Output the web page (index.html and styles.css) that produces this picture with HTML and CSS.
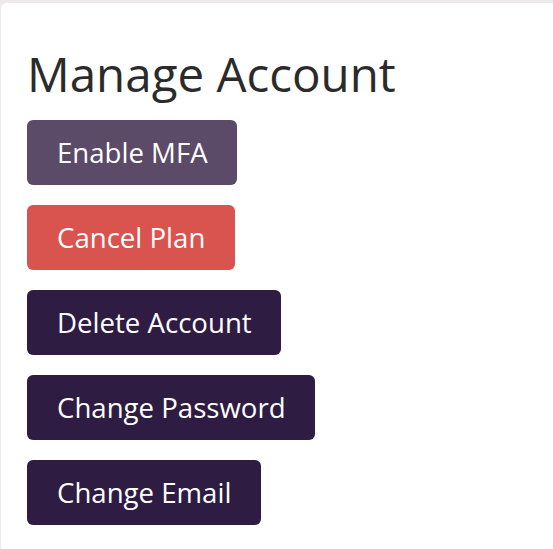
FILE: index.html
```html
<!DOCTYPE html>
<html lang="en">
<head>
<meta charset="utf-8">
<title>Manage Account</title>
<link rel="stylesheet" href="styles.css">
</head>
<body>
<main class="card">
  <h1 class="title">Manage Account</h1>
  <div class="actions">
    <button class="btn btn-mfa">Enable MFA</button>
    <button class="btn btn-danger">Cancel Plan</button>
    <button class="btn btn-dark">Delete Account</button>
    <button class="btn btn-dark">Change Password</button>
    <button class="btn btn-dark">Change Email</button>
  </div>
</main>
</body>
</html>
```
FILE: styles.css
```css
html, body {
  margin: 0;
  padding: 0;
  background: #eeeaea;
  font-family: "Open Sans", "Noto Sans", sans-serif;
  overflow: hidden;
}
.card {
  margin: 3px 0 0 1px;
  background: #ffffff;
  border-radius: 6px 0 0 0;
  padding: 39px 26px 40px 26px;
  min-height: 600px;
}
.title {
  margin: 0 0 14px 0;
  font-size: 47.5px;
  font-weight: 400;
  line-height: 64px;
  color: #2b2b2b;
}
.actions {
  display: flex;
  flex-direction: column;
  align-items: flex-start;
  gap: 20px;
}
.btn {
  font-family: inherit;
  font-size: 27.6px;
  line-height: 37px;
  padding: 14px 29.8px 14px 30px;
  border: none;
  border-radius: 6px;
  color: #ffffff;
  cursor: pointer;
}
.btn-mfa { background: #5b4a68; }
.btn-danger { background: #d9534f; }
.btn-dark { background: #2f1c43; }
```
